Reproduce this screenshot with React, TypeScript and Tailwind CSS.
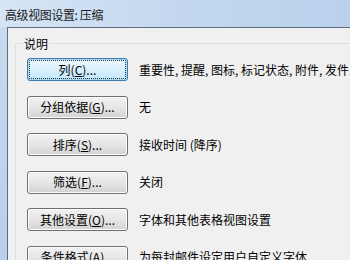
import React from "react";

const rows: { label: string; key: string; rest: string; desc: string; def?: boolean }[] = [
  { label: "列(", key: "C", rest: ")...", desc: "重要性, 提醒, 图标, 标记状态, 附件, 发件人, 主题", def: true },
  { label: "分组依据(", key: "G", rest: ")...", desc: "无" },
  { label: "排序(", key: "S", rest: ")...", desc: "接收时间 (降序)" },
  { label: "筛选(", key: "F", rest: ")...", desc: "关闭" },
  { label: "其他设置(", key: "O", rest: ")...", desc: "字体和其他表格视图设置" },
  { label: "条件格式(", key: "A", rest: ")...", desc: "为每封邮件设定用户自定义字体" },
];

export default function App() {
  return (
    <div
      className="w-[350px] h-[260px] overflow-hidden flex flex-col bg-gradient-to-b from-[#c9dcf1] to-[#b7cfe9] text-black"
      style={{ fontFamily: '"Microsoft YaHei", "Noto Sans CJK SC", sans-serif' }}
    >
      <div className="h-[27px] shrink-0 flex items-center pl-[5px] pt-[2px] text-[12px] tracking-[-0.4px] text-[#1b1b1b] bg-gradient-to-r from-[#d6e5f5] via-[#c3d8ef] to-[#b9d1ec]">
        高级视图设置: 压缩
      </div>
      <div className="flex-1 ml-[7px] border-l border-t border-[#5e6d80] bg-[#f0f0f0] flex flex-col">
        <div className="mt-[15px] ml-[7px] relative border-t border-l border-[#d5dfe5] flex-1">
          <div className="absolute -top-[8px] left-[7px] px-[1px] bg-[#f0f0f0] text-[12px] leading-[15px]">
            说明
          </div>
          <div className="flex flex-col gap-[14.5px] pt-[14px] pl-[11px]">
            {rows.map((r) => (
              <div key={r.label} className="flex items-center">
                <div
                  className={
                    "w-[101px] h-[23px] shrink-0 rounded-[3px] border flex items-center justify-center text-[12px] " +
                    (r.def
                      ? "border-[#3c7fb1] bg-gradient-to-b from-[#eaf6fd] via-[#d9f0fc] to-[#bee6fd] shadow-[inset_0_0_0_1px_#a6d5f0]"
                      : "border-[#707070] bg-gradient-to-b from-[#f2f2f2] via-[#e6e6e6] to-[#d2d2d2] shadow-[inset_0_0_0_1px_#fcfcfc]")
                  }
                >
                  <span
                    className={
                      r.def
                        ? "outline outline-1 outline-dotted outline-[#333] w-[95px] h-[17px] flex items-center justify-center"
                        : ""
                    }
                  >
                    {r.label}
                    <span className="underline">{r.key}</span>
                    {r.rest}
                  </span>
                </div>
                <div className="ml-[11px] text-[12px] whitespace-nowrap">{r.desc}</div>
              </div>
            ))}
          </div>
        </div>
      </div>
    </div>
  );
}
